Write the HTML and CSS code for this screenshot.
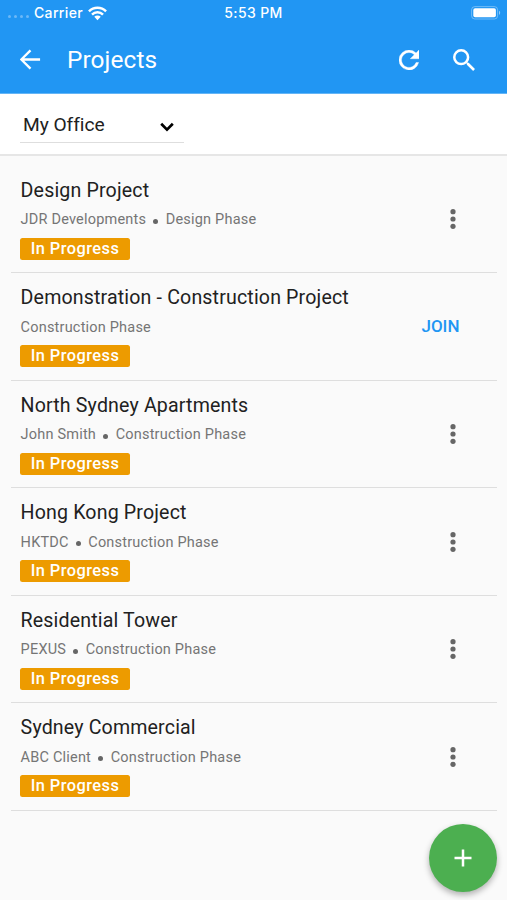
FILE: index.html
```html
<!DOCTYPE html>
<html lang="en">
<head>
<meta charset="utf-8">
<title>Projects</title>
<link rel="stylesheet" href="styles.css">
</head>
<body>
<div class="app">
  <header class="header">
    <div class="status">
      <div class="carrier">
        <span class="signal"><i></i><i></i><i></i><i></i></span>
        <span class="carrier-name">Carrier</span>
        <svg class="wifi" viewBox="0 0 20 15"><path d="M1 5.3a12.7 12.7 0 0 1 18 0M4.2 8.6a8.2 8.2 0 0 1 11.6 0" fill="none" stroke="#fff" stroke-width="2.6"/><path d="M6.6 11a4.8 4.8 0 0 1 6.8 0L10 14.5z" fill="#fff"/></svg>
      </div>
      <span class="time">5:53 PM</span>
      <svg class="battery" viewBox="0 0 30 14"><rect x=".6" y=".6" width="26" height="12.4" rx="3.2" fill="none" stroke="#fff" stroke-opacity=".35"/><rect x="2.3" y="2.3" width="22.6" height="9" rx="1.8" fill="#fff"/><path d="M28 4.7c1.6.7 1.6 3.5 0 4.2z" fill="#fff" fill-opacity=".5"/></svg>
    </div>
    <div class="toolbar">
      <svg class="back" viewBox="4 4 16 16"><path d="M19.3 12H5.2M12 5l-7 7 7 7" fill="none" stroke="#fff" stroke-width="1.8"/></svg>
      <h1>Projects</h1>
      <svg class="refresh" viewBox="4 4 16 16"><path d="M17.65 6.35A7.96 7.96 0 0 0 12 4a8 8 0 1 0 7.73 10h-2.08A6 6 0 1 1 12 6c1.66 0 3.14.69 4.22 1.78L13 11h7V4z" fill="#fff" stroke="#fff" stroke-width=".3"/></svg>
      <svg class="search" viewBox="3 3 17.5 17.5"><path d="M15.5 14h-.79l-.28-.27A6.47 6.47 0 0 0 16 9.5 6.5 6.5 0 1 0 9.5 16c1.61 0 3.09-.59 4.23-1.57l.27.28v.79l5 4.99L20.49 19zM9.5 14a4.5 4.5 0 1 1 0-9 4.5 4.5 0 0 1 0 9z" fill="#fff"/></svg>
    </div>
  </header>
  <div class="filter">
    <div class="select"><span>My Office</span><svg class="chevron" viewBox="0 0 14 10"><path d="M1.2 1.8L7 7.6l5.8-5.8" fill="none" stroke="#000" stroke-width="2.7"/></svg></div>
  </div>
  <main class="list">
    <section class="row"><div class="info"><h2>Design Project</h2><p><span>JDR Developments</span><i class="dot"></i><span>Design Phase</span></p><b class="badge">In Progress</b></div><svg class="more" viewBox="0 0 6 20"><circle cx="3" cy="2.7" r="2.6"/><circle cx="3" cy="10" r="2.6"/><circle cx="3" cy="17.3" r="2.6"/></svg></section>
    <section class="row"><div class="info"><h2>Demonstration - Construction Project</h2><p><span>Construction Phase</span></p><b class="badge">In Progress</b></div><span class="join">JOIN</span></section>
    <section class="row"><div class="info"><h2>North Sydney Apartments</h2><p><span>John Smith</span><i class="dot"></i><span>Construction Phase</span></p><b class="badge">In Progress</b></div><svg class="more" viewBox="0 0 6 20"><circle cx="3" cy="2.7" r="2.6"/><circle cx="3" cy="10" r="2.6"/><circle cx="3" cy="17.3" r="2.6"/></svg></section>
    <section class="row"><div class="info"><h2>Hong Kong Project</h2><p><span>HKTDC</span><i class="dot"></i><span>Construction Phase</span></p><b class="badge">In Progress</b></div><svg class="more" viewBox="0 0 6 20"><circle cx="3" cy="2.7" r="2.6"/><circle cx="3" cy="10" r="2.6"/><circle cx="3" cy="17.3" r="2.6"/></svg></section>
    <section class="row"><div class="info"><h2>Residential Tower</h2><p><span>PEXUS</span><i class="dot"></i><span>Construction Phase</span></p><b class="badge">In Progress</b></div><svg class="more" viewBox="0 0 6 20"><circle cx="3" cy="2.7" r="2.6"/><circle cx="3" cy="10" r="2.6"/><circle cx="3" cy="17.3" r="2.6"/></svg></section>
    <section class="row"><div class="info"><h2>Sydney Commercial</h2><p><span>ABC Client</span><i class="dot"></i><span>Construction Phase</span></p><b class="badge">In Progress</b></div><svg class="more" viewBox="0 0 6 20"><circle cx="3" cy="2.7" r="2.6"/><circle cx="3" cy="10" r="2.6"/><circle cx="3" cy="17.3" r="2.6"/></svg></section>
  </main>
  <div class="fab"><svg viewBox="0 0 18 18"><path d="M9 .5v17M.5 9h17" stroke="#fff" stroke-width="2.5"/></svg></div>
</div>
</body>
</html>
```
FILE: styles.css
```css
* { box-sizing: border-box; }
body { margin: 0; font-family: Roboto, "Liberation Sans", sans-serif; background: #fafafa; }
svg { display: block; flex: none; }
h1, h2, p { margin: 0; font-weight: 400; white-space: nowrap; }
.app { position: relative; height: 900px; overflow: hidden; }
.header { height: 94px; background: #2196f3; color: #fff; border-bottom: 1px solid #64b5f6; }
.status { height: 26px; display: grid; grid-template-columns: 1fr auto 1fr; align-items: center; padding: 0 6px 0 8px; font: 500 14px/26px Inter, sans-serif; letter-spacing: .35px; }
.carrier { display: flex; align-items: center; }
.signal { display: flex; gap: 3px; width: 26px; padding-top: 7px; }
.signal i { width: 3px; height: 3px; border-radius: 50%; background: #6cb8f7; }
.wifi { width: 19px; height: 15px; margin-left: 5px; }
.time { margin-right: 2px; }
.battery { width: 30px; height: 14px; justify-self: end; }
.toolbar { height: 67px; display: flex; align-items: center; padding: 0 32px 0 20px; }
.back { width: 21px; height: 21px; }
.toolbar h1 { flex: 1; margin-left: 26px; font-size: 24.4px; line-height: 32px; letter-spacing: .1px; }
.refresh { width: 20px; height: 20px; margin-right: 34px; }
.search { width: 22px; height: 22px; }
.filter { height: 62px; padding: 12px 20px 0; background: #fff; border-bottom: 2px solid #e6e6e6; }
.select { width: 164px; height: 37px; display: flex; align-items: center; justify-content: space-between; padding: 2px 10px 0 3px; border-bottom: 1px solid #dedede; font-size: 19.2px; letter-spacing: -.05px; color: #212121; line-height: 34px; }
.chevron { width: 14px; height: 10px; margin-top: 3px; }
.list { padding: 9.5px 10px 0 11px; }
.row { height: 107.5px; display: flex; align-items: center; justify-content: space-between; padding: 0 41px 0 9px; border-bottom: 1.5px solid #dedede; }
.info { height: 84px; }
.row h2 { padding: 1px 0 0 .6px; font-size: 19.6px; line-height: 26px; letter-spacing: .15px; color: #212121; }
.row p { height: 20px; margin-top: 6.6px; padding-left: .6px; display: flex; align-items: center; font-size: 14.5px; line-height: 20px; letter-spacing: .2px; color: #757575; }
.dot { width: 5px; height: 5px; margin: 2px 7.3px 0; border-radius: 50%; background: #666; }
.badge { display: block; width: 110px; height: 22px; margin-top: 7.4px; border-radius: 2.5px; background: #ed9b00; color: #fff; text-align: center; font-size: 16.4px; font-weight: 500; line-height: 21px; letter-spacing: .45px; white-space: nowrap; }
.more { width: 6px; height: 20px; margin-top: 1px; fill: #666; }
.join { margin-right: -3.5px; font-size: 17px; font-weight: 500; color: #2196f3; }
.fab { position: absolute; left: 429px; top: 824px; width: 68px; height: 68px; border-radius: 50%; background: #4caf50; box-shadow: 0 3px 6px rgba(0,0,0,.3); display: grid; place-items: center; }
.fab svg { width: 18px; height: 18px; }
```
